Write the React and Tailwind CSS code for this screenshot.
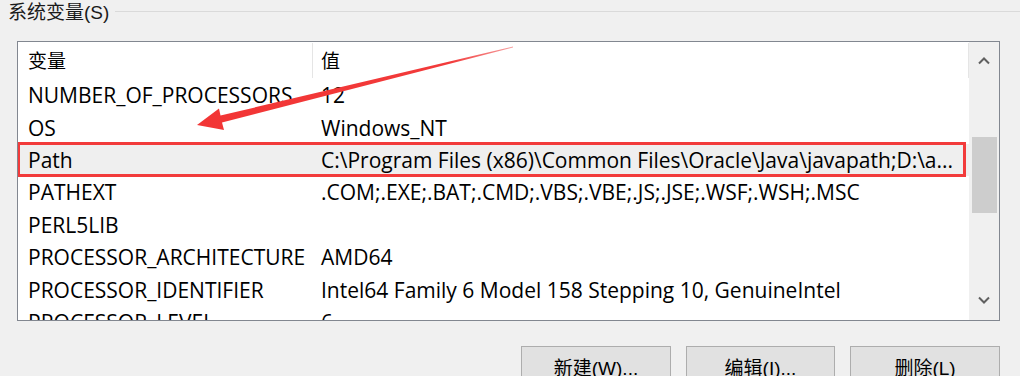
import React from "react";

const rows = [
  ["NUMBER_OF_PROCESSORS", "12"],
  ["OS", "Windows_NT"],
  ["Path", "C:\\Program Files (x86)\\Common Files\\Oracle\\Java\\javapath;D:\\a..."],
  ["PATHEXT", ".COM;.EXE;.BAT;.CMD;.VBS;.VBE;.JS;.JSE;.WSF;.WSH;.MSC"],
  ["PERL5LIB", ""],
  ["PROCESSOR_ARCHITECTURE", "AMD64"],
  ["PROCESSOR_IDENTIFIER", "Intel64 Family 6 Model 158 Stepping 10, GenuineIntel"],
  ["PROCESSOR_LEVEL", "6"],
];

const font = { fontFamily: '"Liberation Sans", "Noto Sans CJK SC", sans-serif' };

function Chevron({ up }) {
  return (
    <svg width="14" height="9" viewBox="0 0 14 9">
      <path
        d={up ? "M2 7.5 L7 2.5 L12 7.5" : "M2 1.5 L7 6.5 L12 1.5"}
        fill="none"
        stroke="#606060"
        strokeWidth="2"
      />
    </svg>
  );
}

function Row({ name, value, selected }) {
  return (
    <div
      className={`relative flex h-[32.4px] items-center shrink-0 font-['Open_Sans',sans-serif] text-[21px] leading-[26px] ${
        selected ? "bg-[#efefef]" : ""
      }`}
    >
      <div className="w-[295px] pl-[10px] whitespace-nowrap">{name}</div>
      <div className="flex-1 pl-[8px] whitespace-nowrap overflow-hidden">{value}</div>
      {selected && (
        <span className="pointer-events-none absolute left-[-1px] right-[3px] top-[-2px] bottom-[-1px] border-[3px] border-[#f23b3b]" />
      )}
    </div>
  );
}

export default function App() {
  return (
    <div className="relative w-[1020px] h-[376px] overflow-hidden bg-[#f0f0f0] text-black text-[19px] leading-none" style={font}>
      {/* group box caption */}
      <div className="flex h-[23px]">
        <div className="pl-[8px] pr-[6px] pt-[3px] text-[#1a1a1a]">系统变量(S)</div>
        <div className="flex-1 mt-[11px] h-px bg-[#dadada]" />
      </div>

      {/* list view */}
      <div className="ml-[17px] mt-[18px] w-[983px] h-[280px] flex border border-[#828790] bg-white overflow-hidden">
        <div className="flex-1 flex flex-col overflow-hidden">
          <div className="flex h-[37px] shrink-0 items-center">
            <div className="w-[294px] pl-[10px] pt-[2px]">变量</div>
            <div className="w-px h-[35px] bg-[#e5e5e5]" />
            <div className="flex-1 pl-[8px] pt-[2px]">值</div>
            <div className="w-px h-[35px] bg-[#e5e5e5]" />
          </div>
          {rows.map(([n, v]) => (
            <Row key={n} name={n} value={v} selected={n === "Path"} />
          ))}
        </div>
        <div className="w-[30px] bg-[#f0f0f0] flex flex-col items-center">
          <div className="h-[34px] flex items-center justify-center pt-[2px]">
            <Chevron up />
          </div>
          <div className="h-[61px]" />
          <div className="w-[25px] h-[76px] bg-[#cdcdcd]" />
          <div className="flex-1" />
          <div className="h-[34px] flex items-center justify-center pb-[6px]">
            <Chevron />
          </div>
        </div>
      </div>

      {/* buttons */}
      <div className="flex justify-end gap-[15px] pr-[20px] mt-[25px]">
        {["新建(W)...", "编辑(I)...", "删除(L)"].map((t, i) => (
          <div
            key={t}
            className={`${i === 1 ? "w-[149px]" : "w-[150px]"} h-[42px] flex items-center justify-center bg-[#e1e1e1] border border-[#adadad] pt-[2px]`}
          >
            {t}
          </div>
        ))}
      </div>

      {/* annotation arrow */}
      <svg className="pointer-events-none absolute left-0 top-0" width="1020" height="376">
        <defs>
          <linearGradient id="ag" x1="197" y1="125" x2="513" y2="47" gradientUnits="userSpaceOnUse">
            <stop offset="0" stopColor="#f23535" />
            <stop offset="0.8" stopColor="#f23a3a" />
            <stop offset="1" stopColor="#f6a0a0" />
          </linearGradient>
        </defs>
        <polygon
          points="197,125 219,108.5 220.5,115.5 513,46.5 513,47.5 222,122.5 224,130"
          fill="url(#ag)"
        />
      </svg>
    </div>
  );
}
